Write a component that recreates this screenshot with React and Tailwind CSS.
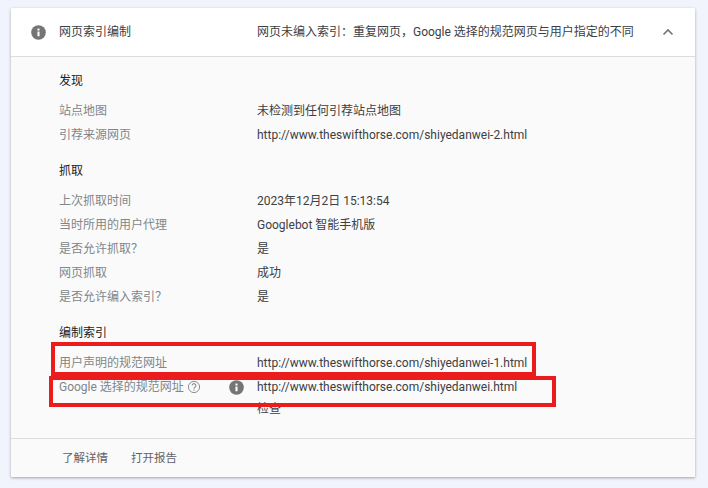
const URL_BASE = 'http://www.theswifthorse.com/';

function Row({ label, children, extra }) {
  return (
    <div className="flex h-6 items-center">
      <div className="flex w-[198px] items-center text-[#80868b]">
        {label}
        {extra}
      </div>
      <div className="text-[#3c4043]">{children}</div>
    </div>
  );
}

function Section({ title, children }) {
  return (
    <div className="mb-3">
      <div className="flex h-6 items-center text-[#202124]">{title}</div>
      <div className="mt-1.5">{children}</div>
    </div>
  );
}

function InfoIcon() {
  return (
    <svg width="15" height="15" viewBox="0 0 16 16" className="shrink-0">
      <circle cx="8" cy="8" r="7.8" fill="#757575" />
      <rect x="6.9" y="7" width="2.2" height="5" fill="#fff" />
      <rect x="6.9" y="3.8" width="2.2" height="2.1" fill="#fff" />
    </svg>
  );
}

function HelpIcon() {
  return (
    <svg width="14" height="14" viewBox="0 0 14 14" className="ml-[3px] shrink-0" fill="none" stroke="#8a8f94">
      <circle cx="7" cy="7" r="5.6" strokeWidth="1" />
      <path d="M5.1 5.6a1.9 1.9 0 1 1 2.9 1.6c-.7.5-1 .8-1 1.6" strokeWidth="1.1" />
      <path d="M7 9.5v1.2" strokeWidth="1.1" />
    </svg>
  );
}

export default function App() {
  return (
    <div className="relative h-[488px] w-[708px] overflow-hidden bg-[#f1f4fd] pt-2 pl-[11px] text-xs font-['Roboto','Noto_Sans_CJK_SC',sans-serif]">
      <div className="flex h-[469px] w-[684px] flex-col overflow-hidden rounded-t-[2px] bg-[#fafafa] shadow-[0_1px_3px_rgba(60,64,67,0.45)]">
        {/* header */}
        <div className="flex h-[49px] shrink-0 items-center border-b border-[#dadce0] bg-white text-[#3c4043]">
          <div className="ml-5 w-[28px]">
            <InfoIcon />
          </div>
          <div className="w-[198px]">网页索引编制</div>
          <div className="w-[403px]">网页未编入索引：重复网页，Google 选择的规范网页与用户指定的不同</div>
          <svg width="12" height="8" viewBox="0 0 12 8" className="ml-[2px]" fill="none" stroke="#757575" strokeWidth="1.6">
            <path d="M1.5 6.5 6 2l4.5 4.5" />
          </svg>
        </div>

        {/* details */}
        <div className="flex-1 pt-3 pl-12">
          <Section title="发现">
            <Row label="站点地图">未检测到任何引荐站点地图</Row>
            <Row label="引荐来源网页">{URL_BASE}shiyedanwei-2.html</Row>
          </Section>
          <Section title="抓取">
            <Row label="上次抓取时间">2023年12月2日 15:13:54</Row>
            <Row label="当时所用的用户代理">Googlebot 智能手机版</Row>
            <Row label="是否允许抓取？">是</Row>
            <Row label="网页抓取">成功</Row>
            <Row label="是否允许编入索引？">是</Row>
          </Section>
          <Section title="编制索引">
            <Row label="用户声明的规范网址">{URL_BASE}shiyedanwei-1.html</Row>
            <Row
              label="Google 选择的规范网址"
              extra={
                <>
                  <HelpIcon />
                  <span className="ml-[28px]">
                    <InfoIcon />
                  </span>
                </>
              }
            >
              {URL_BASE}shiyedanwei.html
            </Row>
            <div className="flex h-5 items-center pl-[198px] text-[#3c4043]">检查</div>
          </Section>
        </div>

        {/* footer */}
        <div className="flex h-[39px] shrink-0 items-center gap-[23px] border-t border-[#dadce0] pt-0.5 pl-[51px] text-[11.5px] text-[#5f6368]">
          <span>了解详情</span>
          <span>打开报告</span>
        </div>
      </div>

      {/* red annotation boxes drawn over the screenshot */}
      <div className="absolute top-[342px] left-[51px] h-[34px] w-[485px] border-4 border-[#ea1c1c]" />
      <div className="absolute top-[376px] left-[49px] h-[31px] w-[507px] border-4 border-[#ea1c1c]" />
    </div>
  );
}
